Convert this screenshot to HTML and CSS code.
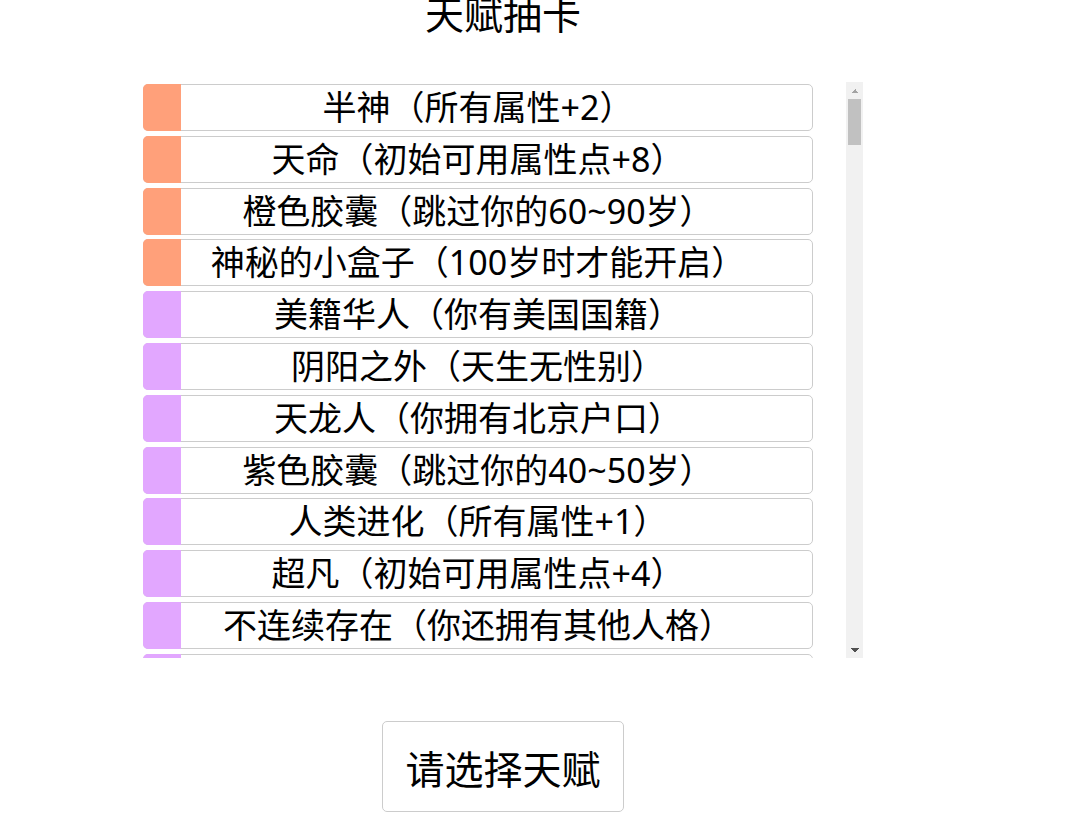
FILE: index.html
```html
<!DOCTYPE html>
<html lang="zh-CN">
  <head>
    <meta charset="utf-8">
    <title>天赋抽卡</title>
    <link rel="stylesheet" href="styles.css">
  </head>
  <body>
    <div class="page">
      <h1 class="title">天赋抽卡</h1>
      <div class="talentsBox">
        <div id="talents" class="talents"></div>
        <div class="scrollbar">
          <div class="sbUp"></div>
          <div class="sbTrack"><div class="sbThumb"></div></div>
          <div class="sbDown"></div>
        </div>
      </div>
      <button class="choose">请选择天赋</button>
    </div>
    <script src="script.js"></script>
  </body>
</html>
```

FILE: styles.css
```css
* {
  margin: 0;
}
body {
  font-family: "Noto Sans", "Noto Sans CJK SC", sans-serif;
  color: #000;
  background: #fff;
}
.page {
  width: 1006px;
  display: flex;
  flex-direction: column;
  align-items: center;
}
.title {
  font-size: 39px;
  font-weight: normal;
  line-height: 40px;
  margin-top: -6px;
}
.talentsBox {
  width: 720px;
  height: 576px;
  margin-top: 48px;
  display: flex;
}
.talents {
  flex: 1;
  padding-top: 2px;
  overflow: hidden;
}
.scrollbar {
  width: 17px;
  background: #f1f1f1;
  display: flex;
  flex-direction: column;
}
.sbUp,
.sbDown {
  height: 17px;
  background-repeat: no-repeat;
  background-position: center;
  background-size: 8px 4px;
}
.sbUp {
  background-image: conic-gradient(from 135deg at 50% 0, #a3a3a3 90deg, transparent 0);
}
.sbDown {
  background-image: conic-gradient(from -45deg at 50% 100%, #505050 90deg, transparent 0);
}
.sbTrack {
  flex: 1;
  padding: 0 2px;
}
.sbThumb {
  height: 46px;
  background: #c1c1c1;
}
.talent {
  position: relative;
  width: 670px;
  height: 47px;
  box-sizing: border-box;
  border: 1px solid #ccc;
  border-radius: 5px;
  margin-bottom: 4.8px;
  text-align: center;
  font-size: 34px;
  line-height: 45px;
  white-space: nowrap;
}
.talent::before {
  content: "";
  position: absolute;
  left: -1px;
  top: -1px;
  bottom: -1px;
  width: 38px;
  border-radius: 5px 0 0 5px;
}
.grade3::before {
  background: #ffa07a;
}
.grade2::before {
  background: #e2a7ff;
}
.choose {
  margin-top: 63px;
  height: 91px;
  padding: 0 22px;
  font-family: inherit;
  font-size: 39px;
  color: #000;
  background: #fff;
  border: 1px solid #ccc;
  border-radius: 5px;
}
```

FILE: script.js
```js
var talents = [
  [3, "半神（所有属性+2）"],
  [3, "天命（初始可用属性点+8）"],
  [3, "橙色胶囊（跳过你的60~90岁）"],
  [3, "神秘的小盒子（100岁时才能开启）"],
  [2, "美籍华人（你有美国国籍）"],
  [2, "阴阳之外（天生无性别）"],
  [2, "天龙人（你拥有北京户口）"],
  [2, "紫色胶囊（跳过你的40~50岁）"],
  [2, "人类进化（所有属性+1）"],
  [2, "超凡（初始可用属性点+4）"],
  [2, "不连续存在（你还拥有其他人格）"],
  [2, "先天免疫（几乎不会生病）"]
];

var list = document.getElementById("talents");
for (var i = 0; i < talents.length; i++) {
  var item = document.createElement("div");
  item.className = "talent grade" + talents[i][0];
  item.textContent = talents[i][1];
  list.appendChild(item);
}
```
